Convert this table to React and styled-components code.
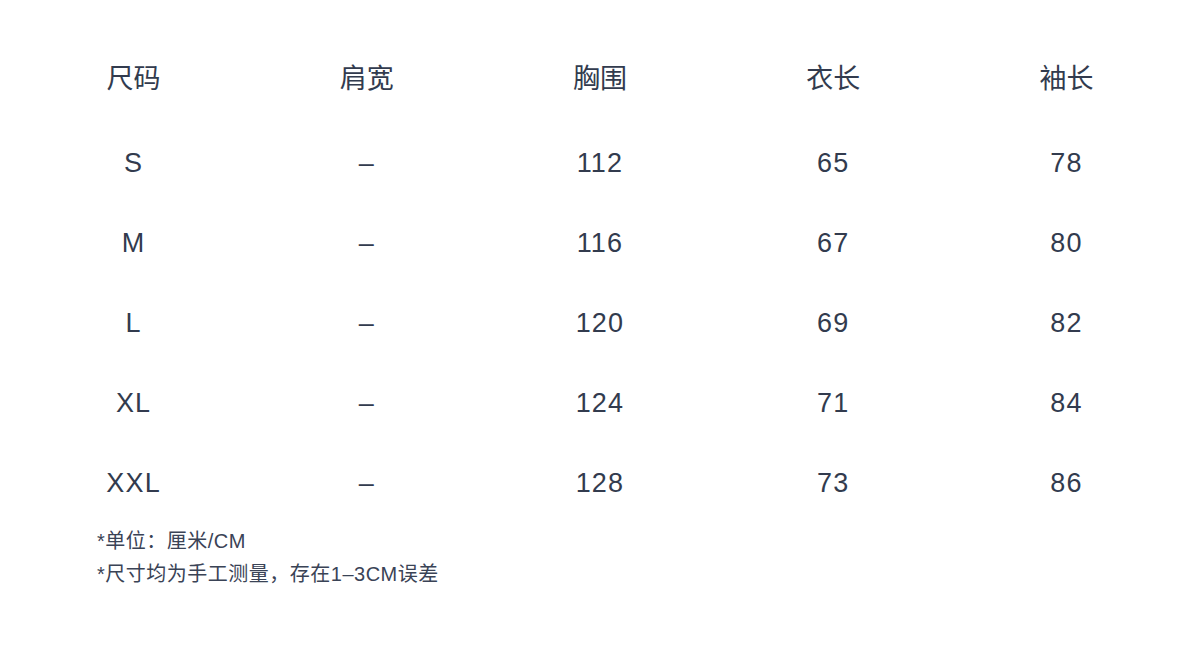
import React from "react";
import styled, { createGlobalStyle } from "styled-components";

const Global = createGlobalStyle`
  html, body { margin: 0; padding: 0; background: #ffffff; }
  body {
    font-family: "Liberation Sans", "Noto Sans CJK SC", sans-serif;
    color: #323b4e;
  }
`;

const Page = styled.div`
  width: 1166px;
  margin: 0 auto;
  padding-top: 36px;
  height: 653px;
  box-sizing: border-box;
`;

const Row = styled.div`
  display: grid;
  grid-template-columns: repeat(5, 1fr);
  height: 80px;
  align-items: center;
  margin-bottom: ${(p) => (p.$head ? "7px" : "0")};
`;

const Cell = styled.div`
  text-align: center;
  font-size: 27px;
  line-height: 1;
  letter-spacing: ${(p) => (p.$head ? "0" : "1.2px")};
  font-family: ${(p) =>
    p.$head
      ? `"Noto Sans CJK SC", sans-serif`
      : `"Liberation Sans", "Noto Sans CJK SC", sans-serif`};
`;

const Notes = styled.div`
  padding-left: 80px;
  margin-top: 2px;
  font-family: "Liberation Sans", "Noto Sans CJK SC", sans-serif;
  font-size: 20px;
  line-height: 33px;
  letter-spacing: 0.5px;
  color: #3a4356;
`;

const headers = ["尺码", "肩宽", "胸围", "衣长", "袖长"];
const rows = [
  ["S", "–", "112", "65", "78"],
  ["M", "–", "116", "67", "80"],
  ["L", "–", "120", "69", "82"],
  ["XL", "–", "124", "71", "84"],
  ["XXL", "–", "128", "73", "86"],
];

export default function App() {
  return (
    <>
      <Global />
      <Page>
        <Row $head>
          {headers.map((h) => (
            <Cell $head key={h}>
              {h}
            </Cell>
          ))}
        </Row>
        {rows.map((r) => (
          <Row key={r[0]}>
            {r.map((c, i) => (
              <Cell key={i}>{c}</Cell>
            ))}
          </Row>
        ))}
        <Notes>
          <div>*单位：厘米/CM</div>
          <div>*尺寸均为手工测量，存在1–3CM误差</div>
        </Notes>
      </Page>
    </>
  );
}
